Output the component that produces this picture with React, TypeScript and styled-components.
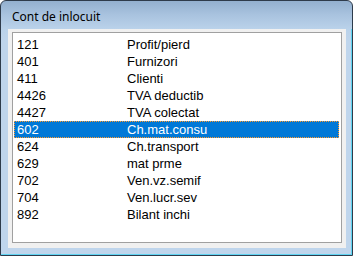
import React from "react"
import styled, { createGlobalStyle } from "styled-components"

const GlobalStyle = createGlobalStyle`
  html, body {
    margin: 0;
    padding: 0;
    background: #ffffff;
  }
`

const Window = styled.div`
  width: 353px;
  height: 256px;
  box-sizing: border-box;
  border: 1px solid #2e3b4b;
  border-radius: 6px 6px 0 0;
  background: linear-gradient(to bottom, #93b0cf 0px, #a9c3df 14px, #bad2ea 28px, #bfd5ec 40px);
  display: flex;
  flex-direction: column;
  overflow: hidden;
`

const Frame = styled.div`
  flex: 1;
  display: flex;
  flex-direction: column;
  border-right: 1px solid #5fd4f2;
  border-bottom: 1px solid #5fd4f2;
  padding: 0 5px 6px 7px;
`

const TitleBar = styled.div`
  height: 28px;
  display: flex;
  align-items: center;
  padding: 2px 0 0 11px;
  box-sizing: border-box;
  font-family: "Segoe UI", "Noto Sans", "DejaVu Sans", sans-serif;
  font-size: 12px;
  color: #000;
`

const Client = styled.div`
  flex: 1;
  background: #f0f0f0;
  padding: 3px 4px 5px 4px;
  display: flex;
`

const ListBox = styled.div`
  flex: 1;
  background: #fff;
  border: 1px solid #a0a0a0;
  padding: 3px 2px 0 1px;
  font-family: "Liberation Sans", Arial, sans-serif;
  font-size: 13px;
`

const Row = styled.div<{ $selected?: boolean }>`
  height: 17px;
  box-sizing: border-box;
  display: flex;
  align-items: center;
  padding-left: 2px;
  color: ${(p) => (p.$selected ? "#fff" : "#000")};
  background: ${(p) => (p.$selected ? "#0078d7" : "transparent")};
  border: 1px ${(p) => (p.$selected ? "dotted #ff9a2e" : "solid transparent")};
`

const Code = styled.span`
  width: 110px;
`

const Name = styled.span``

const rows = [
  ["121", "Profit/pierd"],
  ["401", "Furnizori"],
  ["411", "Clienti"],
  ["4426", "TVA deductib"],
  ["4427", "TVA colectat"],
  ["602", "Ch.mat.consu"],
  ["624", "Ch.transport"],
  ["629", "mat prme"],
  ["702", "Ven.vz.semif"],
  ["704", "Ven.lucr.sev"],
  ["892", "Bilant inchi"],
]

export default function App() {
  return (
    <>
      <GlobalStyle />
      <Window>
        <TitleBar>Cont de inlocuit</TitleBar>
        <Frame>
          <Client>
            <ListBox>
              {rows.map(([code, name]) => (
                <Row key={code} $selected={code === "602"}>
                  <Code>{code}</Code>
                  <Name>{name}</Name>
                </Row>
              ))}
            </ListBox>
          </Client>
        </Frame>
      </Window>
    </>
  )
}
